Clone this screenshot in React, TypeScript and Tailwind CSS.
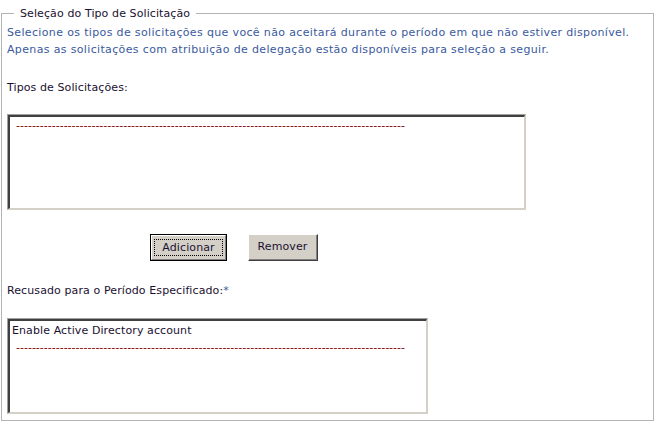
const dashes = '-'.repeat(98)

function ListBox({ width, children }: { width: string; children?: React.ReactNode }) {
  return (
    <div className={`${width} h-[96px] border border-t-[#a0a0a0] border-l-[#a0a0a0] border-r-[#d4d0c8] border-b-[#d4d0c8] bg-white`}>
      <div className="h-full border-t-2 border-l-2 border-r border-b border-t-[#404040] border-l-[#404040] border-r-[#d4d0c8] border-b-[#d4d0c8] px-[2px] pt-px">
        {children}
      </div>
    </div>
  )
}

function DashRow() {
  return <div className="pl-[4px] leading-[15px] text-[#800000] tracking-normal whitespace-nowrap overflow-hidden">{dashes}</div>
}

export default function App() {
  return (
    <div className="w-[654px] h-[422px] bg-white pt-[7px] font-['DejaVu_Sans',sans-serif] text-[11px] tracking-[0.1px] text-[#1a1030]">
      <fieldset className="ml-px w-[653px] h-[414px] border border-[#b4b4b4] pl-[5px]">
        <legend className="ml-[7px] px-[6px] leading-[13px]">Seleção do Tipo de Solicitação</legend>

        <div className="mt-[4px] leading-[17px] tracking-[0.35px] text-[#3a5a9e]">
          <p>Selecione os tipos de solicitações que você não aceitará durante o período em que não estiver disponível.</p>
          <p>Apenas as solicitações com atribuição de delegação estão disponíveis para seleção a seguir.</p>
        </div>

        <p className="mt-[21px] leading-[17px]">Tipos de Solicitações:</p>

        <div className="mt-[18px]">
          <ListBox width="w-[519px]">
            <DashRow />
          </ListBox>
        </div>

        <div className="mt-[24px] flex gap-[21px] pl-[143px]">
          <button className="w-[77px] h-[27px] border border-black bg-[#d4d0c8] p-0">
            <span className="flex h-full items-center justify-center border border-t-white border-l-white border-r-[#808080] border-b-[#808080]">
              <span className="outline outline-1 outline-dotted outline-black px-[7px] leading-[15px]">Adicionar</span>
            </span>
          </button>
          <button className="w-[70px] h-[27px] border border-t-white border-l-white border-r-[#404040] border-b-[#404040] bg-[#d4d0c8] p-0">
            <span className="flex h-full items-center justify-center border-r border-b border-r-[#808080] border-b-[#808080]">
              Remover
            </span>
          </button>
        </div>

        <p className="mt-[21px] leading-[17px]">
          Recusado para o Período Especificado:<span className="text-[#3a5a9e]">*</span>
        </p>

        <div className="mt-[19px]">
          <ListBox width="w-[421px]">
            <div className="-mt-px leading-[19px]">Enable Active Directory account</div>
            <DashRow />
          </ListBox>
        </div>
      </fieldset>
    </div>
  )
}
